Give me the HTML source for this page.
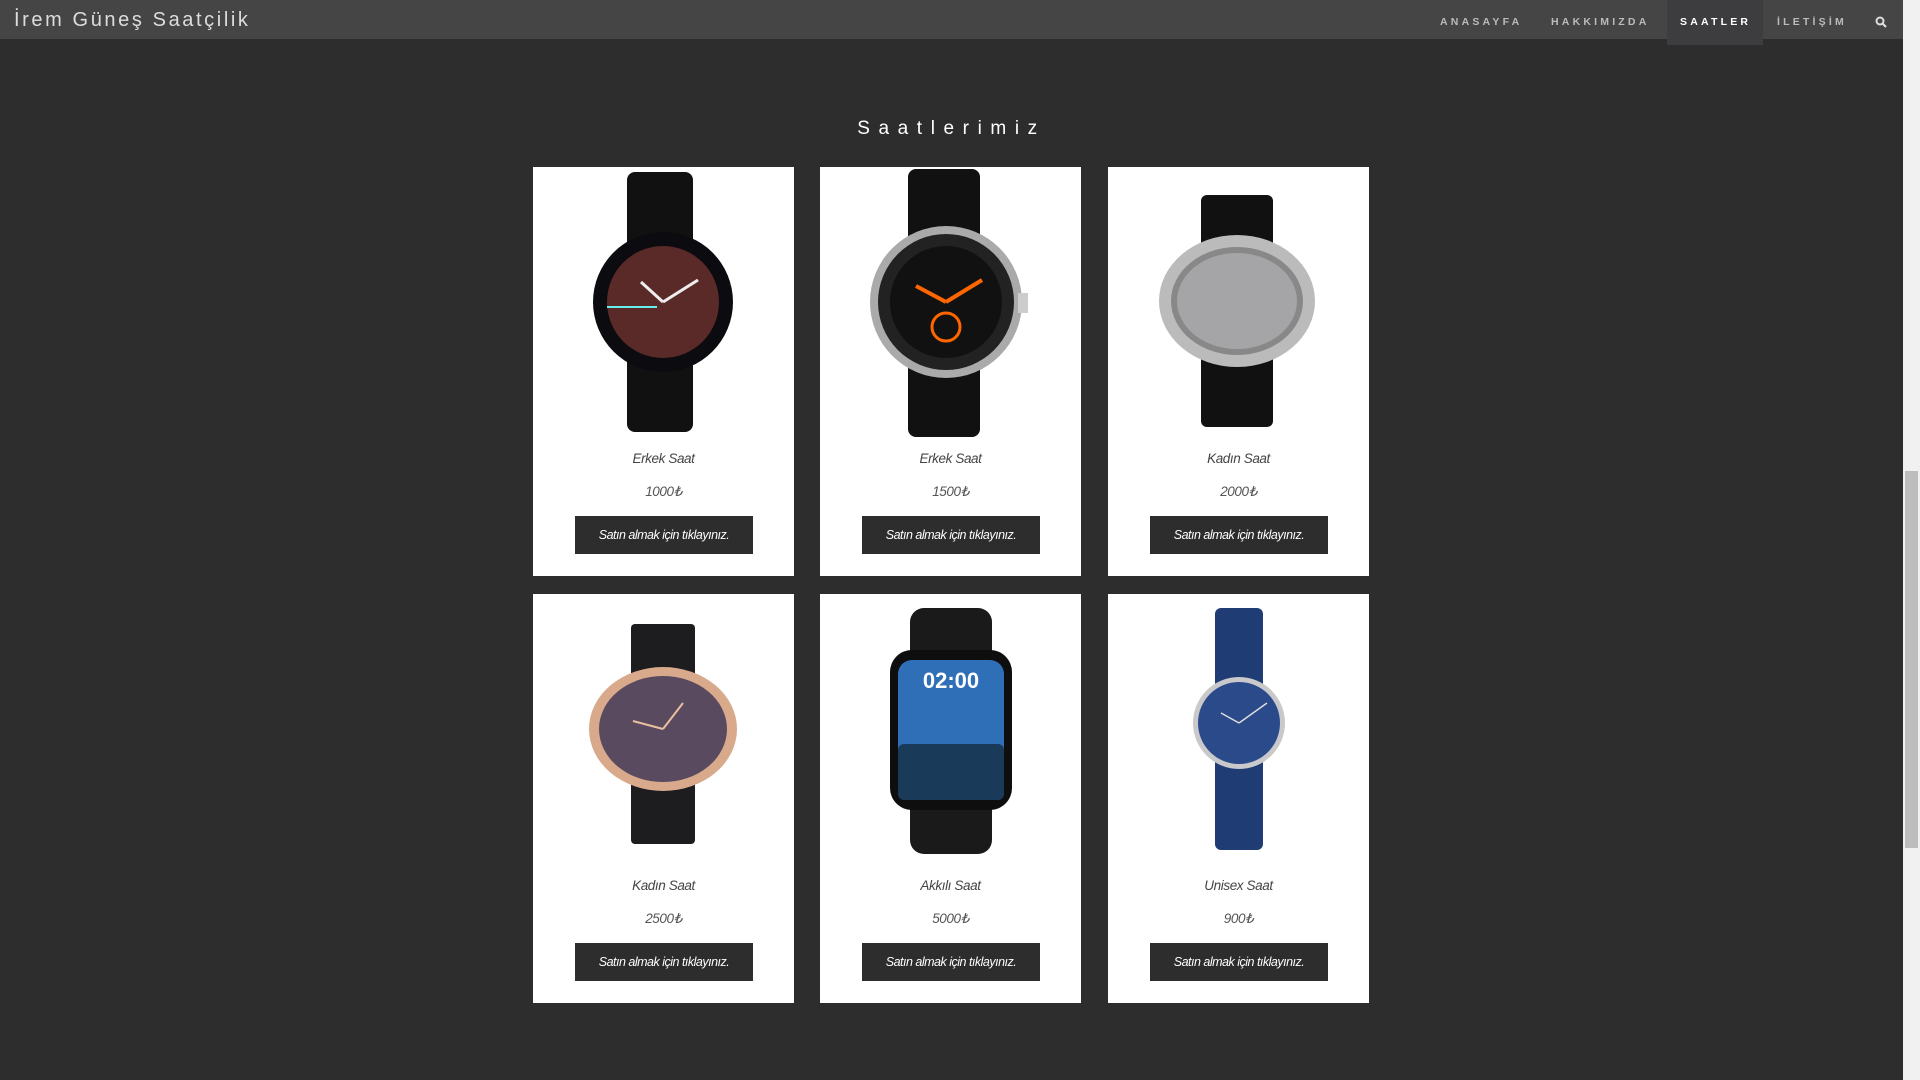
<!DOCTYPE html>
<html><head><meta charset="utf-8"><style>
*{margin:0;padding:0;box-sizing:border-box}
html,body{width:1920px;height:1080px;overflow:hidden;background:#2d2d2e;font-family:"Liberation Sans",sans-serif}
.nav{position:absolute;left:0;top:0;width:1903px;height:39px;background:#454546}
.brand{position:absolute;left:14px;top:9px;color:#ddd;font-size:20px;letter-spacing:2.6px}
.nav a{position:absolute;top:16px;font-size:10.5px;font-weight:bold;letter-spacing:3.2px;color:#bbb;text-decoration:none}
.act{position:absolute;left:1667px;top:0;width:96px;height:45px;background:#3d3d3f}
.sb{position:absolute;left:1903px;top:0;width:17px;height:1080px;background:#f1f1f1}
.th{position:absolute;left:2px;top:471px;width:13px;height:377px;background:#bdbdbd}
h1{position:absolute;left:0;width:1903px;top:118px;text-align:center;color:#fff;font-size:19px;font-weight:normal;letter-spacing:8.6px}
.card{position:absolute;width:261px;height:409px;background:#fff}
.card svg{position:absolute;left:0;top:0}
.t{position:absolute;left:0;width:100%;top:284px;text-align:center;font-style:italic;font-size:13.5px;color:#444;letter-spacing:-.4px}
.p{position:absolute;left:0;width:100%;top:317px;text-align:center;font-style:italic;font-size:13.5px;color:#555;letter-spacing:-.4px}
.b{position:absolute;left:42px;top:349px;width:178px;height:38px;background:#2d2d2d;color:#fff;font-style:italic;font-size:12.5px;letter-spacing:-.5px;text-align:center;line-height:38px}
</style></head><body>
<div class="nav"><div class="act"></div><div class="brand">İrem Güneş Saatçilik</div>
<a style="left:1440px">ANASAYFA</a><a style="left:1551px">HAKKIMIZDA</a><a style="left:1680px;color:#fff">SAATLER</a><a style="left:1777px">İLETİŞİM</a>
<svg style="position:absolute;left:1875px;top:16px" width="12" height="12" viewBox="0 0 12 12"><circle cx="5" cy="5" r="3.5" stroke="#ddd" stroke-width="2" fill="none"/><path d="M7.5 7.5L11 11" stroke="#ddd" stroke-width="2.2"/></svg></div>
<div class="sb"><div class="th"></div></div>
<h1>Saatlerimiz</h1>

<div class="card" style="left:533px;top:167px"><svg width="261" height="280"><rect x="94" y="5" width="66" height="260" rx="8" fill="#111"/><circle cx="130" cy="135" r="70" fill="#0c0c10"/><rect x="160" y="128" width="14" height="14" fill="#bbb"/><circle cx="130" cy="135" r="56" fill="#5a2a28"/><path d="M74 140h50" stroke="#6ee" stroke-width="2"/><path d="M130 135l-22-20M130 135l35-22" stroke="#eee" stroke-width="3"/></svg><div class="t">Erkek Saat</div><div class="p">1000₺</div><div class="b">Satın almak için tıklayınız.</div></div>

<div class="card" style="left:820px;top:167px"><svg width="261" height="280"><rect x="88" y="2" width="72" height="268" rx="8" fill="#111"/><circle cx="126" cy="135" r="76" fill="#aaa"/><circle cx="126" cy="135" r="68" fill="#222"/><circle cx="126" cy="135" r="56" fill="#111"/><circle cx="126" cy="160" r="14" fill="none" stroke="#f60" stroke-width="3"/><path d="M126 135l-30-16M126 135l36-22" stroke="#f60" stroke-width="4"/><rect x="198" y="126" width="10" height="20" fill="#ccc"/></svg><div class="t">Erkek Saat</div><div class="p">1500₺</div><div class="b">Satın almak için tıklayınız.</div></div>

<div class="card" style="left:1108px;top:167px"><svg width="261" height="280"><rect x="93" y="28" width="72" height="232" rx="6" fill="#111"/><ellipse cx="129" cy="134" rx="78" ry="66" fill="#bbb"/><ellipse cx="129" cy="134" rx="66" ry="54" fill="#888"/><ellipse cx="129" cy="134" rx="60" ry="48" fill="#a5a5a8"/></svg><div class="t">Kadın Saat</div><div class="p">2000₺</div><div class="b">Satın almak için tıklayınız.</div></div>

<div class="card" style="left:533px;top:594px"><svg width="261" height="280"><rect x="98" y="30" width="64" height="220" rx="4" fill="#1d1d1f"/><ellipse cx="130" cy="135" rx="74" ry="62" fill="#d9a98c"/><ellipse cx="130" cy="135" rx="64" ry="53" fill="#5a4a60"/><path d="M130 135l-30-8M130 135l20-26" stroke="#e8c0a0" stroke-width="2"/></svg><div class="t">Kadın Saat</div><div class="p">2500₺</div><div class="b">Satın almak için tıklayınız.</div></div>

<div class="card" style="left:820px;top:594px"><svg width="261" height="280"><rect x="90" y="14" width="82" height="246" rx="14" fill="#1a1a1a"/><rect x="70" y="56" width="122" height="160" rx="22" fill="#0e0e0e"/><rect x="78" y="66" width="106" height="140" rx="14" fill="#2f6fb8"/><rect x="78" y="150" width="106" height="56" rx="6" fill="#1a3a5a"/><text x="131" y="94" text-anchor="middle" fill="#fff" font-size="22" font-weight="bold" font-family="Liberation Sans">02:00</text></svg><div class="t">Akkılı Saat</div><div class="p">5000₺</div><div class="b">Satın almak için tıklayınız.</div></div>

<div class="card" style="left:1108px;top:594px"><svg width="261" height="280"><rect x="107" y="14" width="48" height="242" rx="6" fill="#1f3d74"/><circle cx="131" cy="129" r="46" fill="#c9c9cc"/><circle cx="131" cy="129" r="41" fill="#2a4a8a"/><path d="M131 129l-18-10M131 129l28-20" stroke="#ddd" stroke-width="1.5"/></svg><div class="t">Unisex Saat</div><div class="p">900₺</div><div class="b">Satın almak için tıklayınız.</div></div>
</body></html>
